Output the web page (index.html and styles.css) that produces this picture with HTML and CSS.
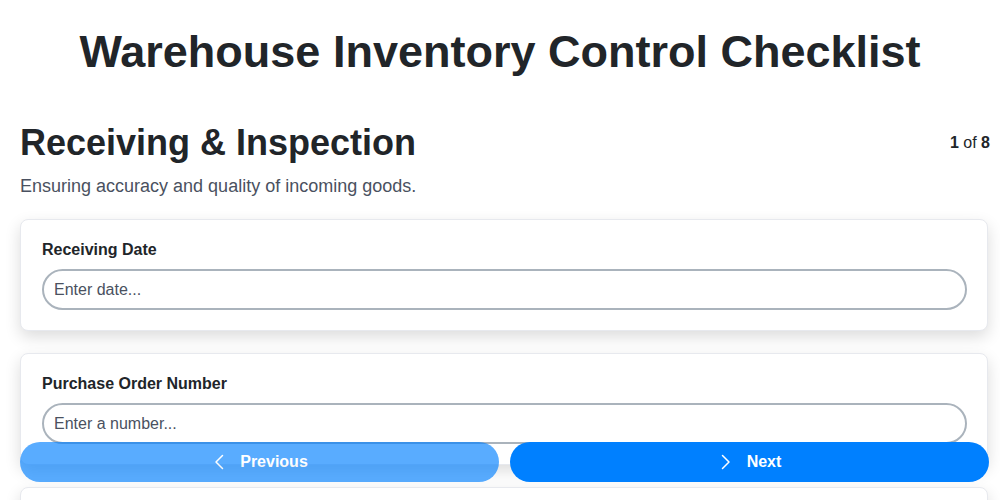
FILE: index.html
```html
<!DOCTYPE html>
<html lang="en">
<head>
    <meta charset="UTF-8">
    <meta name="viewport" content="width=device-width, initial-scale=1.0">
    <title>Warehouse Inventory Control Checklist</title>
    <link rel="stylesheet" href="styles.css">
</head>
<body>
    <h1 class="title">Warehouse Inventory Control Checklist</h1>
    <main class="page">
        <div class="section-head">
            <h2>Receiving &amp; Inspection</h2>
            <div class="step"><b>1</b> of <b>8</b></div>
        </div>
        <p class="section-desc">Ensuring accuracy and quality of incoming goods.</p>

        <div class="card">
            <label for="receiving_date">Receiving Date</label>
            <input type="text" id="receiving_date" placeholder="Enter date...">
        </div>

        <div class="card">
            <label for="po_number">Purchase Order Number</label>
            <input type="text" id="po_number" placeholder="Enter a number...">
        </div>

        <div class="card">
            <label for="supplier">Supplier Name</label>
            <input type="text" id="supplier" placeholder="Enter text...">
        </div>
    </main>

    <div class="nav">
        <button class="btn btn-prev">
            <svg width="16" height="16" viewBox="0 0 16 16" fill="none" stroke="currentColor" stroke-width="1.5" stroke-linecap="round" stroke-linejoin="round"><path d="M11.5 1.5 5 8l6.5 6.5"/></svg>
            Previous
        </button>
        <button class="btn btn-next">
            <svg width="16" height="16" viewBox="0 0 16 16" fill="none" stroke="currentColor" stroke-width="1.5" stroke-linecap="round" stroke-linejoin="round"><path d="M4.5 1.5 11 8l-6.5 6.5"/></svg>
            Next
        </button>
    </div>
</body>
</html>
```

FILE: styles.css
```css
body {
    font-family: 'Liberation Sans', Arial, sans-serif;
    background-color: #ffffff;
    color: #212529;
    margin: 0;
}

.title {
    margin: 0;
    padding-top: 24px;
    text-align: center;
    font-size: 45px;
    line-height: 55px;
    font-weight: bold;
}

.page {
    padding: 0 10px 80px 20px;
    margin-top: 40px;
}

.section-head {
    display: flex;
    justify-content: space-between;
    align-items: center;
}

.section-head h2 {
    margin: 0;
    font-size: 36px;
    line-height: 48px;
}

.step {
    font-size: 16px;
}

.section-desc {
    margin: 6px 0 19px;
    font-size: 18px;
    line-height: 27px;
    color: #4a5160;
}

.card {
    background: #ffffff;
    border: 1px solid #e7e9ee;
    border-radius: 8px;
    box-shadow: 0 6px 16px rgba(0, 0, 0, 0.14);
    padding: 20px 20px 20px 21px;
    margin: 0 2px 22px 0;
}

label {
    display: block;
    font-size: 16px;
    line-height: 19px;
    font-weight: bold;
    margin-bottom: 10px;
}

input {
    display: block;
    width: 100%;
    box-sizing: border-box;
    height: 41px;
    padding: 0 10px;
    border: 2px solid #aab3bc;
    border-radius: 21px;
    font-family: inherit;
    font-size: 16px;
    color: #212529;
    outline: none;
}

input::placeholder {
    color: #4a5160;
}

.nav {
    position: fixed;
    left: 20px;
    right: 11px;
    bottom: 18px;
    display: flex;
    gap: 11px;
}

.btn {
    flex: 1;
    height: 40px;
    border: none;
    border-radius: 20px;
    background-color: #0080ff;
    color: #ffffff;
    font-family: inherit;
    font-size: 16px;
    font-weight: bold;
    display: flex;
    justify-content: center;
    align-items: center;
    gap: 13px;
    cursor: pointer;
}

.btn-prev {
    opacity: 0.65;
}
```
